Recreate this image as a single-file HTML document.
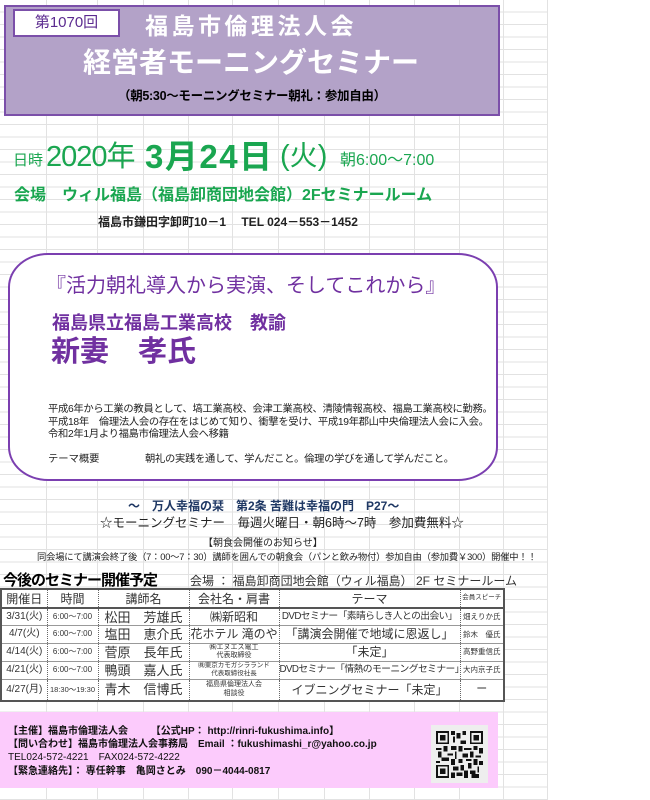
<!DOCTYPE html>
<html><head><meta charset="utf-8"><style>
*{margin:0;padding:0;box-sizing:border-box}
body{width:650px;height:800px;position:relative;overflow:hidden;background:#fff;font-family:"Liberation Sans","Noto Sans CJK JP",sans-serif;color:#000}
.grid{position:absolute;left:0;top:0;width:548px;height:800px;
background-image:repeating-linear-gradient(to bottom,transparent 0,transparent 11.5px,#e2e2e2 11.5px,#e2e2e2 12.5px);}
.v{position:absolute;top:0;width:1px;height:800px;background:#e2e2e2}
.a{position:absolute;white-space:nowrap;line-height:1}
.hdr{position:absolute;left:4px;top:5px;width:496px;height:111px;background:#b3a2c8;border:2px solid #7b4fa9}
.rbox{position:absolute;left:8px;top:253px;width:490px;height:228px;border:2px solid #7b3fb0;border-radius:40px/34px;background:#fff}
.g{color:#1aa650}
.p{color:#7030a0}
table{position:absolute;left:0;top:588px;width:503px;table-layout:fixed;border-collapse:collapse;border:2px solid #555;background:#fff;font-size:11px;color:#333}
td{border-left:1px dotted #666;border-top:1px solid #999;text-align:center;white-space:nowrap;overflow:hidden;height:17.6px;padding:0;line-height:1}
td.s{font-size:7px;line-height:8.5px}
td.t{font-size:9.8px;letter-spacing:-0.6px}
tr.h td{height:19px;border-top:none;border-bottom:2px solid #555;font-size:12px}
</style></head><body>
<div class="grid"></div>
<div class="v" style="left:46px"></div><div class="v" style="left:97px"></div><div class="v" style="left:143px"></div><div class="v" style="left:188px"></div><div class="v" style="left:232px"></div><div class="v" style="left:278px"></div><div class="v" style="left:324px"></div><div class="v" style="left:369px"></div><div class="v" style="left:414px"></div><div class="v" style="left:459px"></div><div class="v" style="left:503px"></div><div class="v" style="left:547px"></div>

<div class="hdr"></div>
<div class="a" style="left:13px;top:9px;width:107px;height:28px;background:#fff;border:2px solid #7b4fa9;color:#5b2a8f;font-size:15px;text-align:center;line-height:24px">第1070回</div>
<div class="a" style="left:145px;top:15px;font-size:23px;font-weight:bold;color:#fff;letter-spacing:3.5px">福島市倫理法人会</div>
<div class="a" style="left:83px;top:49px;font-size:28px;font-weight:bold;color:#fff">経営者モーニングセミナー</div>
<div class="a" style="left:118px;top:90px;font-size:12.5px;font-weight:bold;letter-spacing:-0.3px">（朝5:30～モーニングセミナー朝礼：参加自由）</div>

<div class="a g" style="left:13px;top:153px;font-size:15px">日時</div>
<div class="a g" style="left:46px;top:143px;font-size:29px;letter-spacing:-1px">2020年</div>
<div class="a g" style="left:145px;top:140px;font-size:33px;font-weight:bold;letter-spacing:1.5px">3月24日</div>
<div class="a g" style="left:280px;top:142px;font-size:29px">(<span style="font-size:28px">火</span>)</div>
<div class="a g" style="left:340px;top:153px;font-size:16px">朝6:00～7:00</div>
<div class="a g" style="left:14px;top:188px;font-size:16px;font-weight:bold">会場　ウィル福島（福島卸商団地会館）2Fセミナールーム</div>
<div class="a" style="left:98px;top:216px;font-size:12px;font-weight:bold;color:#222">福島市鎌田字卸町10－1　 TEL 024－553－1452</div>

<div class="rbox"></div>
<div class="a p" style="left:46px;top:276px;font-size:20px">『活力朝礼導入から実演、そしてこれから』</div>
<div class="a p" style="left:52px;top:314px;font-size:18px;font-weight:bold">福島県立福島工業高校　教諭</div>
<div class="a p" style="left:51px;top:338px;font-size:29px;font-weight:bold">新妻　孝氏</div>
<div class="a" style="left:48px;top:404px;font-size:10.3px;line-height:12.5px;color:#222;letter-spacing:-0.3px">平成6年から工業の教員として、塙工業高校、会津工業高校、清陵情報高校、福島工業高校に勤務。<br>平成18年　倫理法人会の存在をはじめて知り、衝撃を受け、平成19年郡山中央倫理法人会に入会。<br>令和2年1月より福島市倫理法人会へ移籍</div>
<div class="a" style="left:48px;top:455px;font-size:10.3px;color:#222">テーマ概要</div>
<div class="a" style="left:145px;top:455px;font-size:10.3px;color:#222;letter-spacing:-0.3px">朝礼の実践を通して、学んだこと。倫理の学びを通して学んだこと。</div>

<div class="a" style="left:128px;top:500px;font-size:12px;font-weight:bold;color:#1f3864">～　万人幸福の栞　第2条 苦難は幸福の門　P27～</div>
<div class="a" style="left:100px;top:517px;font-size:12.5px;color:#222">☆モーニングセミナー　毎週火曜日・朝6時～7時　参加費無料☆</div>
<div class="a" style="left:203px;top:539px;font-size:10px;color:#222">【朝食会開催のお知らせ】</div>
<div class="a" style="left:37px;top:553px;font-size:9.3px;color:#222;letter-spacing:-0.2px">同会場にて講演会終了後（7：00～7：30）講師を囲んでの朝食会（パンと飲み物付）参加自由（参加費￥300）開催中！！</div>
<div class="a" style="left:3px;top:573px;font-size:15px;font-weight:bold;letter-spacing:-1px">今後のセミナー開催予定</div>
<div class="a" style="left:190px;top:575px;font-size:12px;color:#333">会場 ： 福島卸商団地会館（ウィル福島） 2F セミナールーム</div>

<table>
<colgroup><col style="width:46px"><col style="width:51px"><col style="width:91px"><col style="width:90px"><col style="width:181px"><col style="width:44px"></colgroup>
<tr class="h"><td style="border-left:none">開催日</td><td>時間</td><td>講師名</td><td>会社名・肩書</td><td>テーマ</td><td style="font-size:6.5px">会員スピーチ</td></tr>
<tr><td style="border-left:none;font-size:10px">3/31(火)</td><td style="font-size:8px">6:00～7:00</td><td style="font-size:13px">松田　芳雄氏</td><td style="font-size:12px">㈱新昭和</td><td class="t">DVDセミナー「素晴らしき人との出会い」</td><td style="font-size:7.5px">畑えりか氏</td></tr>
<tr><td style="border-left:none;font-size:10px">4/7(火)</td><td style="font-size:8px">6:00～7:00</td><td style="font-size:13px">塩田　恵介氏</td><td style="font-size:12px">花ホテル 滝のや</td><td style="font-size:12px">「講演会開催で地域に恩返し」</td><td style="font-size:7.5px">鈴木　優氏</td></tr>
<tr><td style="border-left:none;font-size:10px">4/14(火)</td><td style="font-size:8px">6:00～7:00</td><td style="font-size:13px">菅原　長年氏</td><td class="s">㈱エヌエス電工<br>代表取締役</td><td style="font-size:12px">「未定」</td><td style="font-size:7.5px">高野重信氏</td></tr>
<tr><td style="border-left:none;font-size:10px">4/21(火)</td><td style="font-size:8px">6:00～7:00</td><td style="font-size:13px">鴨頭　嘉人氏</td><td class="s" style="font-size:6.5px">㈱東京カモガシラランド<br>代表取締役社長</td><td class="t">DVDセミナー「情熱のモーニングセミナー」</td><td style="font-size:7.5px">大内京子氏</td></tr>
<tr><td style="border-left:none;font-size:10px;height:22px">4/27(月)</td><td style="font-size:7.5px">18:30～19:30</td><td style="font-size:13px">青木　信博氏</td><td class="s">福島県倫理法人会<br>相談役</td><td style="font-size:12px">イブニングセミナー「未定」</td><td>ー</td></tr>
</table>

<div style="position:absolute;left:0;top:712px;width:498px;height:76px;background:#fccbfc"></div>
<div class="a" style="left:8px;top:725px;font-size:10px;line-height:13.2px;color:#111;font-weight:bold">【主催】福島市倫理法人会　　 【公式HP： http://rinri-fukushima.info】<br>【問い合わせ】福島市倫理法人会事務局　Email ：fukushimashi_r@yahoo.co.jp<br><span style="font-weight:normal">TEL024-572-4221　FAX024-572-4222</span><br>【緊急連絡先】： 専任幹事　亀岡さとみ　090－4044-0817</div>
<div style="position:absolute;left:431px;top:725px;width:57px;height:58px;background:#eee"></div>
<svg style="position:absolute;left:436px;top:731px" width="47" height="47" viewBox="0 0 25 25" shape-rendering="crispEdges">
<g fill="#111">
<path d="M0 0h7v7h-7zM1 1v5h5v-5zM2 2h3v3h-3z"/>
<path d="M18 0h7v7h-7zM19 1v5h5v-5zM20 2h3v3h-3z"/>
<path d="M0 18h7v7h-7zM1 19v5h5v-5zM2 20h3v3h-3z"/>
<path d="M8 0h2v2h-2zM11 1h2v3h-2zM14 0h2v2h-2zM9 3h1v3h-1zM13 5h3v2h-3zM8 8h3v2h-3zM12 8h2v3h-2zM15 9h4v1h-4zM20 8h2v2h-2zM23 9h2v3h-2zM0 9h3v1h-3zM4 8h2v3h-2zM1 11h2v3h-2zM6 12h3v1h-3zM10 11h1v4h-1zM14 12h3v2h-3zM18 11h2v3h-2zM21 13h3v1h-3zM3 14h4v2h-4zM8 15h2v3h-2zM12 15h2v2h-2zM16 15h3v1h-3zM20 15h2v3h-2zM23 16h2v2h-2zM9 19h3v2h-3zM13 18h2v3h-2zM17 17h2v3h-2zM8 22h2v3h-2zM11 22h3v2h-3zM15 21h2v4h-2zM18 21h3v2h-3zM22 19h1v3h-1zM19 23h4v2h-4zM0 16h2v1h-2z"/>
</g></svg>
</body></html>
